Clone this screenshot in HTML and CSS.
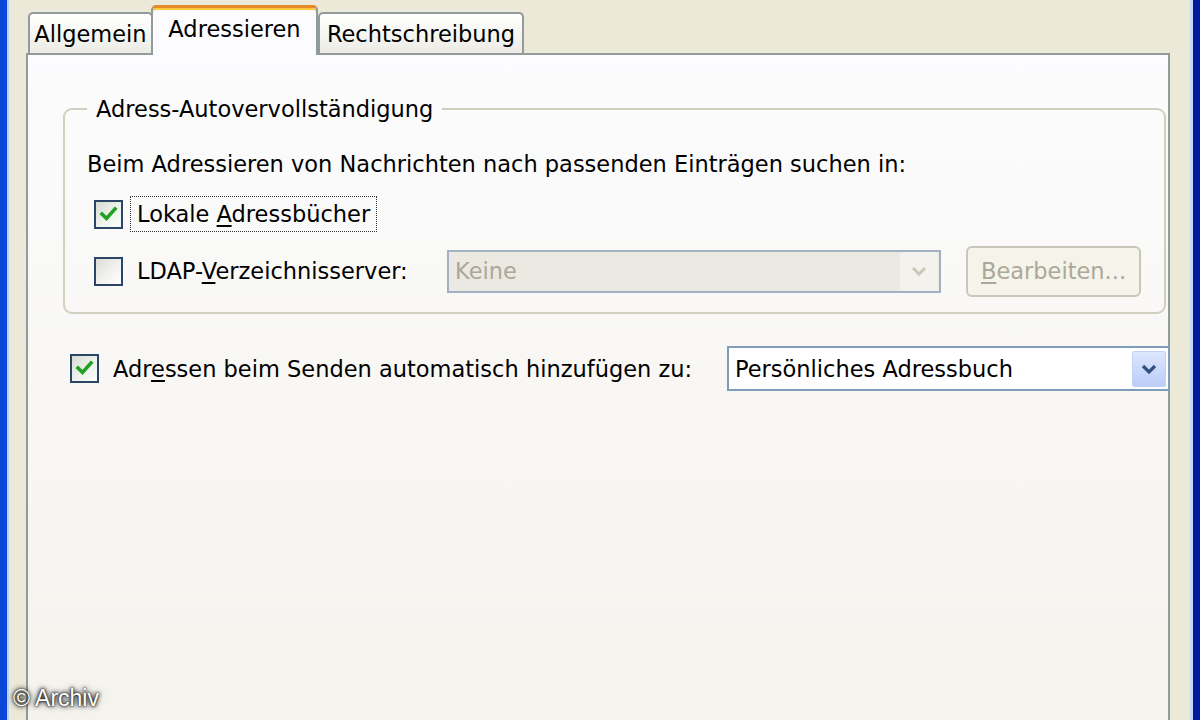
FILE: index.html
```html
<!DOCTYPE html>
<html lang="de">
<head>
<meta charset="utf-8">
<title>Adressieren</title>
<link rel="stylesheet" href="styles.css">
</head>
<body>
<div class="window">
  <div class="inner">
    <div class="tabs">
      <div class="tab t1">Allgemein</div>
      <div class="tab selected">Adressieren</div>
      <div class="tab t3">Rechtschreibung</div>
    </div>
    <div class="panel">
      <fieldset class="group">
        <legend>Adress-Autovervollständigung</legend>
        <p class="intro">Beim Adressieren von Nachrichten nach passenden Einträgen suchen in:</p>
        <div class="row row1">
          <span class="cb checked"><svg viewBox="0 0 25 25" width="25" height="25"><polyline points="6,12 10.5,16.5 19,7" fill="none" stroke="#21a121" stroke-width="3.6" stroke-linecap="square"/></svg></span>
          <span class="focus"><span>Lokale <u>A</u>dressbücher</span></span>
        </div>
        <div class="row row2">
          <span class="cb"></span>
          <span class="label ldap">LDAP-<u>V</u>erzeichnisserver:</span>
          <div class="combo disabled">
            <span class="value">Keine</span>
            <span class="drop"><svg viewBox="0 0 16 10" width="16" height="10"><polyline points="2,2 8,8 14,2" fill="none" stroke="#c9c7ba" stroke-width="3"/></svg></span>
          </div>
          <div class="button disabled"><span><u>B</u>earbeiten...</span></div>
        </div>
      </fieldset>
      <div class="row row3">
        <span class="cb checked"><svg viewBox="0 0 25 25" width="25" height="25"><polyline points="6,12 10.5,16.5 19,7" fill="none" stroke="#21a121" stroke-width="3.6" stroke-linecap="square"/></svg></span>
        <span class="label send">Adr<u>e</u>ssen beim Senden automatisch hinzufügen zu:</span>
        <div class="combo enabled">
          <span class="value">Persönliches Adressbuch</span>
          <span class="drop"><svg viewBox="0 0 16 10" width="16" height="10"><polyline points="2,2 8,8 14,2" fill="none" stroke="#34507f" stroke-width="3.2"/></svg></span>
        </div>
      </div>
    </div>
  </div>
  <div class="watermark">© Archiv</div>
</div>
</body>
</html>
```

FILE: styles.css
```css
html, body {
  margin: 0;
  padding: 0;
}
body {
  width: 1200px;
  height: 720px;
  overflow: hidden;
  background: #ece9d8;
  font-family: "DejaVu Sans", "Noto Sans", sans-serif;
  font-size: 22.5px;
  color: #000;
}
.window {
  position: relative;
  display: flex;
  height: 720px;
  box-sizing: border-box;
  border-left: 7px solid #0a47d6;
  border-right: 7px solid #001ba0;
}
.inner {
  flex: 1;
  display: flex;
  flex-direction: column;
  border-left: 2px solid #b9d2f2;
  border-right: 3px solid #c2d8f4;
  padding: 0 20px 0 17px;
  min-width: 0;
}

/* Tabs */
.tabs {
  position: relative;
  z-index: 1;
  display: flex;
  align-items: flex-end;
  height: 55px;
  margin-bottom: -2px;
  padding-left: 2px;
}
.tab {
  box-sizing: border-box;
  height: 41px;
  margin-bottom: 2px;
  display: flex;
  align-items: center;
  justify-content: center;
  border: 2px solid #919b9c;
  border-bottom: none;
  border-radius: 5px 5px 0 0;
  background: linear-gradient(180deg, #ffffff 0%, #f7f7f4 45%, #ecebe5 100%);
  line-height: 1;
  padding-top: 1px;
}
.tab.t1 {
  width: 125px;
}
.tab.t3 {
  width: 206px;
}
.tab.selected {
  position: relative;
  z-index: 2;
  width: 167px;
  height: 50px;
  margin: 0 0 0 -2px;
  border-top: 3px solid #e68b2c;
  box-shadow: inset 0 2px 0 #ffc73c;
  border-radius: 5px 5px 0 0;
  background: #fcfcfe;
  padding-bottom: 5px;
}

/* Panel */
.panel {
  flex: 1;
  display: flex;
  flex-direction: column;
  border: 2px solid #919b9c;
  border-bottom: none;
  background: linear-gradient(180deg, #fcfcfe 0%, #f8f7f4 50%, #f4f3ee 100%);
}

/* Group box */
.group {
  margin: 41px 2px 0 35px;
  border: 2px solid #d0d0bf;
  border-radius: 9px;
  padding: 28px 23px 15px 22px;
  min-width: 0;
}
.group legend {
  padding: 0 9px;
  line-height: 26px;
}
.intro {
  margin: 0;
  line-height: 28px;
}
.row {
  display: flex;
  align-items: center;
}
.row1 {
  height: 36px;
  margin-top: 18px;
  padding-left: 7px;
}
.row2 {
  height: 52px;
  margin-top: 13px;
  padding-left: 7px;
}
.row3 {
  height: 45px;
  margin: 32px -2px 0 42px;
}

/* Checkbox */
.cb {
  flex: none;
  box-sizing: border-box;
  width: 29px;
  height: 29px;
  border: 2px solid #2b4566;
  background: linear-gradient(135deg, #dcdcd7 0%, #f2f2ef 55%, #ffffff 100%);
  display: flex;
  align-items: center;
  justify-content: center;
}
.cb.checked {
  background: linear-gradient(135deg, #d6dcd2 0%, #eef3ec 55%, #fbfdfb 100%);
}
.focus {
  margin-left: 7px;
  padding: 0 6px;
  height: 36px;
  box-sizing: border-box;
  display: flex;
  align-items: center;
  border: 1px dotted #333;
  white-space: nowrap;
}
.label {
  flex: none;
  margin-left: 14px;
  white-space: nowrap;
}
.label.ldap {
  width: 310px;
}
.label.send {
  width: 614px;
}
u {
  text-decoration-thickness: 2px;
  text-underline-offset: 3px;
}

/* Combo boxes */
.combo {
  display: flex;
  align-items: center;
  box-sizing: border-box;
  border: 2px solid #7f9db9;
}
.combo .value {
  flex: 1;
  padding-left: 6px;
  white-space: nowrap;
}
.combo .drop {
  flex: none;
  display: flex;
  align-items: center;
  justify-content: center;
  box-sizing: border-box;
  border-radius: 2px;
}
.combo.disabled {
  width: 494px;
  height: 43px;
  border-color: #a4b1c2;
  background: #ebe9e2;
}
.combo.disabled .value {
  color: #aca899;
}
.combo.disabled .drop {
  width: 38px;
  height: 39px;
  margin-right: 1px;
  background: #f3f2ec;
}
.combo.enabled {
  flex: 1;
  height: 45px;
  background: #ffffff;
}
.combo.enabled .drop {
  width: 34px;
  height: 36px;
  margin-right: 2px;
  border: 1px solid #c3d1f5;
  background: linear-gradient(180deg, #dde7fd 0%, #cbd9fc 50%, #bccdf7 100%);
}

/* Button */
.button {
  flex: none;
  box-sizing: border-box;
  width: 175px;
  height: 51px;
  margin-left: 25px;
  display: flex;
  align-items: center;
  justify-content: center;
  border: 2px solid #c9c7ba;
  border-radius: 6px;
  background: #f5f4ea;
  white-space: nowrap;
}
.button.disabled {
  color: #aca899;
}

/* Watermark */
.watermark {
  position: absolute;
  left: 6px;
  bottom: 8px;
  font-family: "Liberation Sans", Arial, sans-serif;
  font-size: 23px;
  color: #ffffff;
  text-shadow: 0 0 2px #000, 0 0 4px #000, 0 0 7px rgba(0, 0, 0, 0.7);
}
```
